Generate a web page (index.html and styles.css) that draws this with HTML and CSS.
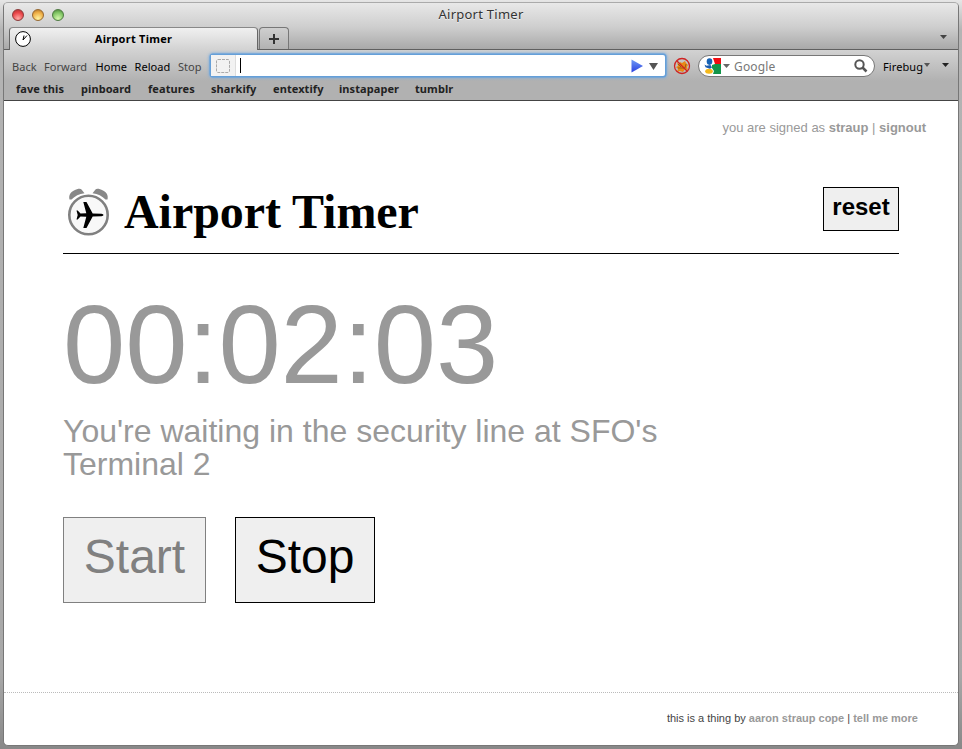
FILE: index.html
```html
<!DOCTYPE html>
<html lang="en">
<head>
<meta charset="utf-8">
<title>Airport Timer</title>
<link rel="stylesheet" href="styles.css">
</head>
<body>
<div class="window">
  <header class="chrome">
    <div class="titlebar">
      <div class="lights"><i class="light red"></i><i class="light amber"></i><i class="light green"></i></div>
      <span class="window-title">Airport Timer</span>
    </div>
    <div class="tabs">
      <div class="tab">
        <svg class="favicon" width="16" height="16" viewBox="0 0 16 16"><circle cx="8" cy="8" r="7.4" fill="#fff" stroke="#000" stroke-width="1"/><path d="M8 9l1-4.500M8 9l4-4.500" stroke="#000" fill="none"/></svg>
        <span class="tab-title">Airport Timer</span>
      </div>
      <div class="newtab"><svg width="10" height="10" viewBox="0 0 10 10"><path d="M5 0v10M0 5h10" stroke="#333" stroke-width="2"/></svg></div>
      <svg class="alltabs" width="7" height="4" viewBox="0 0 7 4"><path d="M0 0h7L3.5 4z" fill="#444"/></svg>
    </div>
    <div class="toolbar">
      <span class="tool back off">Back</span><span class="tool forward off">Forward</span><span class="tool home">Home</span><span class="tool reload">Reload</span><span class="tool stop off">Stop</span>
      <div class="urlbar">
        <div class="identity"><svg width="16" height="16" viewBox="0 0 16 16"><rect x="1.5" y="1.5" width="13" height="13" rx="1.5" fill="none" stroke="#aaa" stroke-dasharray="3 1"/></svg></div>
        <i class="caret"></i>
        <svg class="go" width="28" height="14" viewBox="0 0 28 14"><defs><linearGradient id="g" x2="0" y2="1"><stop offset="0" stop-color="#6f9af5"/><stop offset="1" stop-color="#2a40e0"/></linearGradient></defs><path d="M.5 .5L12 7 .5 13.5z" fill="url(#g)"/><path d="M18 4h9l-4.500 7z" fill="#555"/></svg>
      </div>
      <svg class="bug" width="18" height="18" viewBox="0 0 18 18"><path d="M4 5l2 2 1-2 2 1 3-2 1 2 2 2-1 2 1 3-3-1-2 3-3-1-3 1 1-3-2-2 2-1z" fill="#e98a16"/><path d="M5 11h7l1-4M5 7l3 3" stroke="#9b5a16" fill="none"/><circle cx="9" cy="9" r="7.500" fill="none" stroke="#cf2222" stroke-width="1.300"/><path d="M4 4l10 10" stroke="#cf2222" stroke-width="1.300"/></svg>
      <div class="search">
        <svg class="google" width="17" height="16" viewBox="0 0 17 16"><path d="M9 0h8v6h-6z" fill="#f00c12"/><path d="M11 6h6v10h-8l1-3-2-3V7z" fill="#12954a"/><ellipse cx="5.500" cy="3.600" rx="2.800" ry="3.300" fill="#1763b5"/><ellipse cx="5" cy="13.300" rx="3.800" ry="2.500" fill="#f4b81b"/><path d="M.5 6.500l2 1.300L6.500 7 8 9.500l-2 1.300-4.500-1.600z" fill="#1c5cae"/></svg>
        <svg class="drop" width="7" height="4" viewBox="0 0 7 4"><path d="M0 0h7L3.500 4z" fill="#666"/></svg>
        <span class="engine">Google</span>
        <svg class="lens" width="14" height="14" viewBox="0 0 14 14"><circle cx="5.500" cy="5.500" r="4.200" fill="none" stroke="#555" stroke-width="2"/><path d="M8.500 8.500l4 4" stroke="#555" stroke-width="2.500"/></svg>
      </div>
      <span class="firebug">Firebug</span>
      <svg class="drop fb" width="6" height="4" viewBox="0 0 6 4"><path d="M0 0h6L3 4z" fill="#555"/></svg>
      <svg class="drop more" width="7" height="4" viewBox="0 0 7 4"><path d="M0 0h7L3.500 4z" fill="#222"/></svg>
    </div>
    <nav class="bookmarks"><span class="b1">fave this</span><span class="b2">pinboard</span><span class="b3">features</span><span class="b4">sharkify</span><span class="b5">entextify</span><span class="b6">instapaper</span><span class="b7">tumblr</span></nav>
  </header>
  <main class="page">
    <div class="signed">you are signed as <b>straup</b> | <b>signout</b></div>
    <div class="masthead">
      <svg class="logo" width="44" height="50" viewBox="0 0 44 50"><path d="M2.500 11.500C1.500 7 3.500 4.500 7 2.500S13.500 .2 14.500 1.500L17.500 5.200Q9.500 6.200 4.500 11.500zM40.500 11.500C41.500 7 39.500 4.500 36 2.500S29.500 .2 28.500 1.500L25.500 5.200Q33.500 6.200 38.500 11.500z" fill="#888"/><circle cx="21.500" cy="27" r="19.200" fill="#f8f8f8" stroke="#808080" stroke-width="2.600"/><path d="M36.500 27q0 1-2 1.200l-8.800.3-6.200 11.500h-3.200l3-11.300-5.800-.3-2.800 3H9.500l1.200-4.400-1.200-4.400h1.200l2.800 3 5.800-.3-3-11.300h3.200l6.200 11.500 8.800.3q2 .2 2 1.200z" fill="#000"/></svg>
      <h1>Airport Timer</h1>
      <button class="reset">reset</button>
    </div>
    <div class="clock">00:02:03</div>
    <p class="status">You're waiting in the security line at SFO's<br>Terminal 2</p>
    <div class="actions"><button class="action disabled">Start</button><button class="action">Stop</button></div>
    <footer>this is a thing by <b class="author">aaron straup cope</b> | <b>tell me more</b></footer>
  </main>
</div>
</body>
</html>
```
FILE: styles.css
```css
* { box-sizing: border-box; }
body { margin: 0; width: 962px; height: 749px; padding: 2px 3px 3px; overflow: hidden; background: linear-gradient(#e6e6e6 0, #b4b4b4 30px, #a8a8a8 90%, #888 100%); font-family: "Liberation Sans", Arial, sans-serif; }
svg { display: block; flex: none; }
.window { height: 744px; border: 1px solid #777; border-top-color: #aaa; border-radius: 5px; overflow: hidden; background: #fff; display: flex; flex-direction: column; }
.chrome { height: 98px; flex: none; border-bottom: 1px solid #444; background: #b1b1b1; font-family: "Noto Sans", "Open Sans", sans-serif; font-size: 11px; color: #000; }
.titlebar { height: 24px; background: linear-gradient(#e8e8e8, #cecece); display: grid; grid-template-columns: 1fr auto 1fr; align-items: center; }
.lights { display: flex; gap: 8px; padding-left: 8px; }
.light { width: 12px; height: 12px; border-radius: 50%; border: 1px solid #777; }
.red { background: radial-gradient(circle at 50% 85%, #ffaaa5, #ea4549 60%, #a33); border-color: #8d3a3a; }
.amber { background: radial-gradient(circle at 50% 85%, #fff3a0, #efae45 60%, #a86d27); border-color: #97682f; }
.green { background: radial-gradient(circle at 50% 85%, #d5f8ad, #80c564 60%, #477c36); border-color: #4d7a41; }
.window-title { font-size: 13px; letter-spacing: .25px; margin-top: -2px; color: #333; line-height: 20px; text-shadow: 0 1px #eee; }
.tabs { height: 23px; background: linear-gradient(#cecece, #a9a9a9); border-bottom: 1px solid #606060; display: flex; padding: 0 12px 0 5px; }
.tab { width: 249px; height: 23px; background: linear-gradient(#f0f0f0, #d2d2d2); border: 1px solid #666; border-top-color: #888; border-bottom: 0; border-radius: 4px 4px 0 0; display: flex; align-items: center; padding-left: 5px; }
.tab-title { flex: 1; text-align: center; font-weight: bold; letter-spacing: .25px; padding: 0 21px 2px 0; }
.newtab { width: 30px; height: 22px; margin-left: 1px; border: 1px solid #777; border-bottom: 0; border-radius: 4px 4px 0 0; background: linear-gradient(#cfcfcf, #b2b2b2); display: flex; align-items: center; justify-content: center; }
.alltabs { margin: 8px -1px 0 auto; }
.toolbar { height: 31px; background: linear-gradient(#d2d2d2, #b1b1b1); display: flex; align-items: center; padding-left: 8px; }
.tool { white-space: nowrap; padding-top: 1px; letter-spacing: .05px; }
.off { color: #444; }
.back { width: 32px; } .forward { width: 51.500px; } .home { width: 39px; } .reload { width: 43.500px; } .stop { width: 33px; }
.urlbar { width: 454px; height: 21px; background: #fff; box-shadow: 0 0 0 1.500px #659fd8, 0 0 3px 2px #78abe0; border-radius: 2px; display: flex; align-items: center; }
.identity { width: 25px; height: 21px; padding: 3px 0 0 4px; background: #f2f2f2; border-right: 1px solid #ddd; }
.caret { width: 1px; height: 15px; margin-left: 4px; background: #000; }
.go { margin: 0 6px 0 auto; }
.bug { margin-left: 8px; }
.search { width: 177px; height: 22px; margin-left: 7px; border: 1px solid #777; border-radius: 11px; background: #fff; display: flex; align-items: center; padding: 0 6px 0 5px; }
.drop { margin-left: 2px; }
.engine { font-size: 12px; color: #777; margin: 1px 0 0 4px; letter-spacing: .15px; }
.lens { margin-left: auto; }
.firebug { margin-left: 8px; padding-top: 1px; letter-spacing: .1px; }
.fb { margin: 0 0 1px 1px; }
.more { margin: 0 0 1px 12px; }
.bookmarks { display: flex; padding-left: 12px; font-weight: bold; letter-spacing: .08px; color: #222; line-height: 15px; white-space: nowrap; }
.b1 { width: 65px; } .b2 { width: 67px; } .b3 { width: 63px; } .b4 { width: 62px; } .b5 { width: 66px; } .b6 { width: 76px; }
.page { flex: 1; display: flex; flex-direction: column; padding-left: 59px; }
.signed { margin: 19px 32px 0 0; text-align: right; font-size: 13px; line-height: 15px; color: #999; }
.masthead { margin: 51px 59px 0 0; height: 68px; border-bottom: 1px solid #000; display: flex; align-items: flex-start; }
.logo { margin: 2px 0 0 4px; }
h1 { margin: -2px 0 0 13px; font: bold 48px/55px "Liberation Serif", "Times New Roman", serif; letter-spacing: -.05px; }
button { font-family: inherit; margin: 0; background: #efefef; border: 1px solid #000; color: #000; }
.reset { margin: 1px 0 0 auto; width: 76px; height: 44px; padding: 0 0 5px; font-size: 24px; font-weight: bold; }
.clock { margin-top: 35px; font-size: 112px; line-height: 112px; letter-spacing: -.1px; color: #999; }
.status { margin: 14px 0 0; font-size: 32px; line-height: 33px; color: #999; white-space: nowrap; }
.actions { margin-top: 36px; display: flex; gap: 29px; }
.action { width: 140px; height: 86px; padding: 0 0 8px; font-size: 48px; }
.disabled { width: 143px; color: #808080; border-color: #808080; }
footer { margin: auto 0 0 -59px; height: 53px; border-top: 1px dotted #bbb; padding: 19px 40px 0 0; text-align: right; font-size: 11px; line-height: 13px; color: #444; }
footer b { color: #999; }
```
